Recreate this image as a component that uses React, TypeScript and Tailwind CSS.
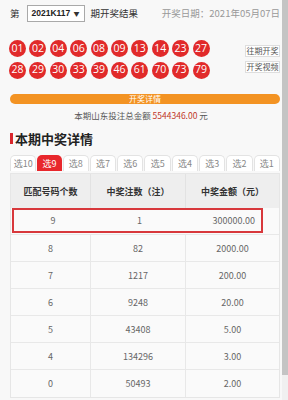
import React from "react";

const BALLS = [
  ["01", "02", "04", "06", "08", "09", "13", "14", "23", "27"],
  ["28", "29", "30", "33", "39", "46", "61", "70", "73", "79"],
];

const TABS = ["选10", "选9", "选8", "选7", "选6", "选5", "选4", "选3", "选2", "选1"];

const ROWS = [
  ["8", "82", "2000.00"],
  ["7", "1217", "200.00"],
  ["6", "9248", "20.00"],
  ["5", "43408", "5.00"],
  ["4", "134296", "3.00"],
  ["0", "50493", "2.00"],
];

const font = { fontFamily: '"Noto Sans CJK SC", "Noto Sans", sans-serif' };

export default function App() {
  return (
    <div className="w-[288px] h-[400px] overflow-hidden flex bg-[#f8f8f8]" style={font}>
      <div className="w-[282px] h-full">
        {/* Header row */}
        <div className="flex items-center h-[17px] mt-[5px] pl-[10px] pr-[2px] text-[9.5px]">
          <span className="text-[#333]">第</span>
          <div className="ml-[7px] w-[58px] h-[17px] bg-white border border-[#a9a9a9] flex items-center justify-between px-[4px]">
            <span className="text-[8.5px] font-bold text-[#222]" style={{ fontFamily: '"Liberation Sans", sans-serif' }}>2021K117</span>
            <span className="text-[6px] text-[#333]">▼</span>
          </div>
          <span className="ml-[6px] text-[#333]">期开奖结果</span>
          <span className="ml-auto text-[#999]">开奖日期：2021年05月07日</span>
        </div>

        {/* Balls + side buttons */}
        <div className="flex mt-[18px] pl-[9px]">
          <div className="flex flex-col gap-[4.7px]">
            {BALLS.map((row, i) => (
              <div key={i} className="flex gap-[3.4px]">
                {row.map((b) => (
                  <div
                    key={b}
                    className="w-[17px] h-[17px] rounded-full bg-[#e12a2a] text-white text-[10.5px] flex items-center justify-center"
                    style={{ fontFamily: '"Open Sans", "Noto Sans", sans-serif' }}
                  >
                    {b}
                  </div>
                ))}
              </div>
            ))}
          </div>
          <div className="ml-auto mr-[2px] mt-[5px] flex flex-col gap-[4px]">
            <div className="w-[35px] h-[12px] bg-white border border-[#dedede] text-[8px] text-[#555] flex items-center justify-center">往期开奖</div>
            <div className="w-[35px] h-[12px] bg-white border border-[#dedede] text-[8px] text-[#555] flex items-center justify-center">开奖视频</div>
          </div>
        </div>

        {/* Orange bar */}
        <div className="mx-[10px] mr-[2px] mt-[15px] h-[10px] rounded-full bg-[#f39323] text-white text-[8px] flex items-center justify-center leading-none">
          开奖详情
        </div>
        <div className="mt-[5px] text-center text-[8.5px] text-[#555]">
          本期山东投注总金额 <span className="text-[#c0392b]">5544346.00</span> 元
        </div>

        {/* Title */}
        <div className="flex items-center mt-[11px] pl-[10px]">
          <div className="w-[3px] h-[11px] bg-[#d9262c]" />
          <span className="ml-[2px] text-[13px] font-bold text-[#222] leading-none">本期中奖详情</span>
        </div>

        {/* Tabs */}
        <div className="flex gap-[1px] mt-[10px] ml-[10px] mr-[2px]">
          {TABS.map((t, i) => (
            <div
              key={t}
              className={`flex-1 h-[16px] rounded-t-[5px] flex items-center justify-center text-[9px] ${
                i === 1 ? "bg-[#e8272c] text-white" : "bg-white border border-[#e3e3e3] border-b-0 text-[#888]"
              }`}
            >
              {t}
            </div>
          ))}
        </div>

        {/* Table */}
        <div className="ml-[10px] mr-[2px] mt-[2px] border border-[#e6e6e6] bg-[#fafafa] text-[9px]">
          <div className="grid grid-cols-[80px_95px_1fr] h-[34px] bg-[#eeeeee] font-bold text-[#333]">
            <div className="flex items-center justify-center border-r border-[#e2e2e2]">匹配号码个数</div>
            <div className="flex items-center justify-center border-r border-[#e2e2e2]">中奖注数（注）</div>
            <div className="flex items-center justify-center">中奖金额（元）</div>
          </div>
          <div className="h-[27px] relative border-b border-[#e8e8e8] text-[#666]">
            <div className="absolute left-[1px] top-0 w-[251px] h-[25px] border-2 border-[#d8383c] grid grid-cols-[78px_95px_1fr]">
              <div className="flex items-center justify-center">9</div>
              <div className="flex items-center justify-center">1</div>
              <div className="flex items-center justify-end pr-[6px]">300000.00</div>
            </div>
          </div>
          {ROWS.map((r, i) => (
            <div
              key={i}
              className={`grid grid-cols-[80px_95px_1fr] h-[27px] text-[#666] ${i < ROWS.length - 1 ? "border-b border-[#e8e8e8]" : ""}`}
            >
              <div className="flex items-center justify-center border-r border-[#e8e8e8]">{r[0]}</div>
              <div className="flex items-center justify-center border-r border-[#e8e8e8]">{r[1]}</div>
              <div className="flex items-center justify-center">{r[2]}</div>
            </div>
          ))}
        </div>
      </div>

      {/* Scrollbar */}
      <div className="w-[6px] h-full bg-[#f0f0f0]">
        <div className="w-full h-[375px] bg-[#c4c4c4]" />
      </div>
    </div>
  );
}
